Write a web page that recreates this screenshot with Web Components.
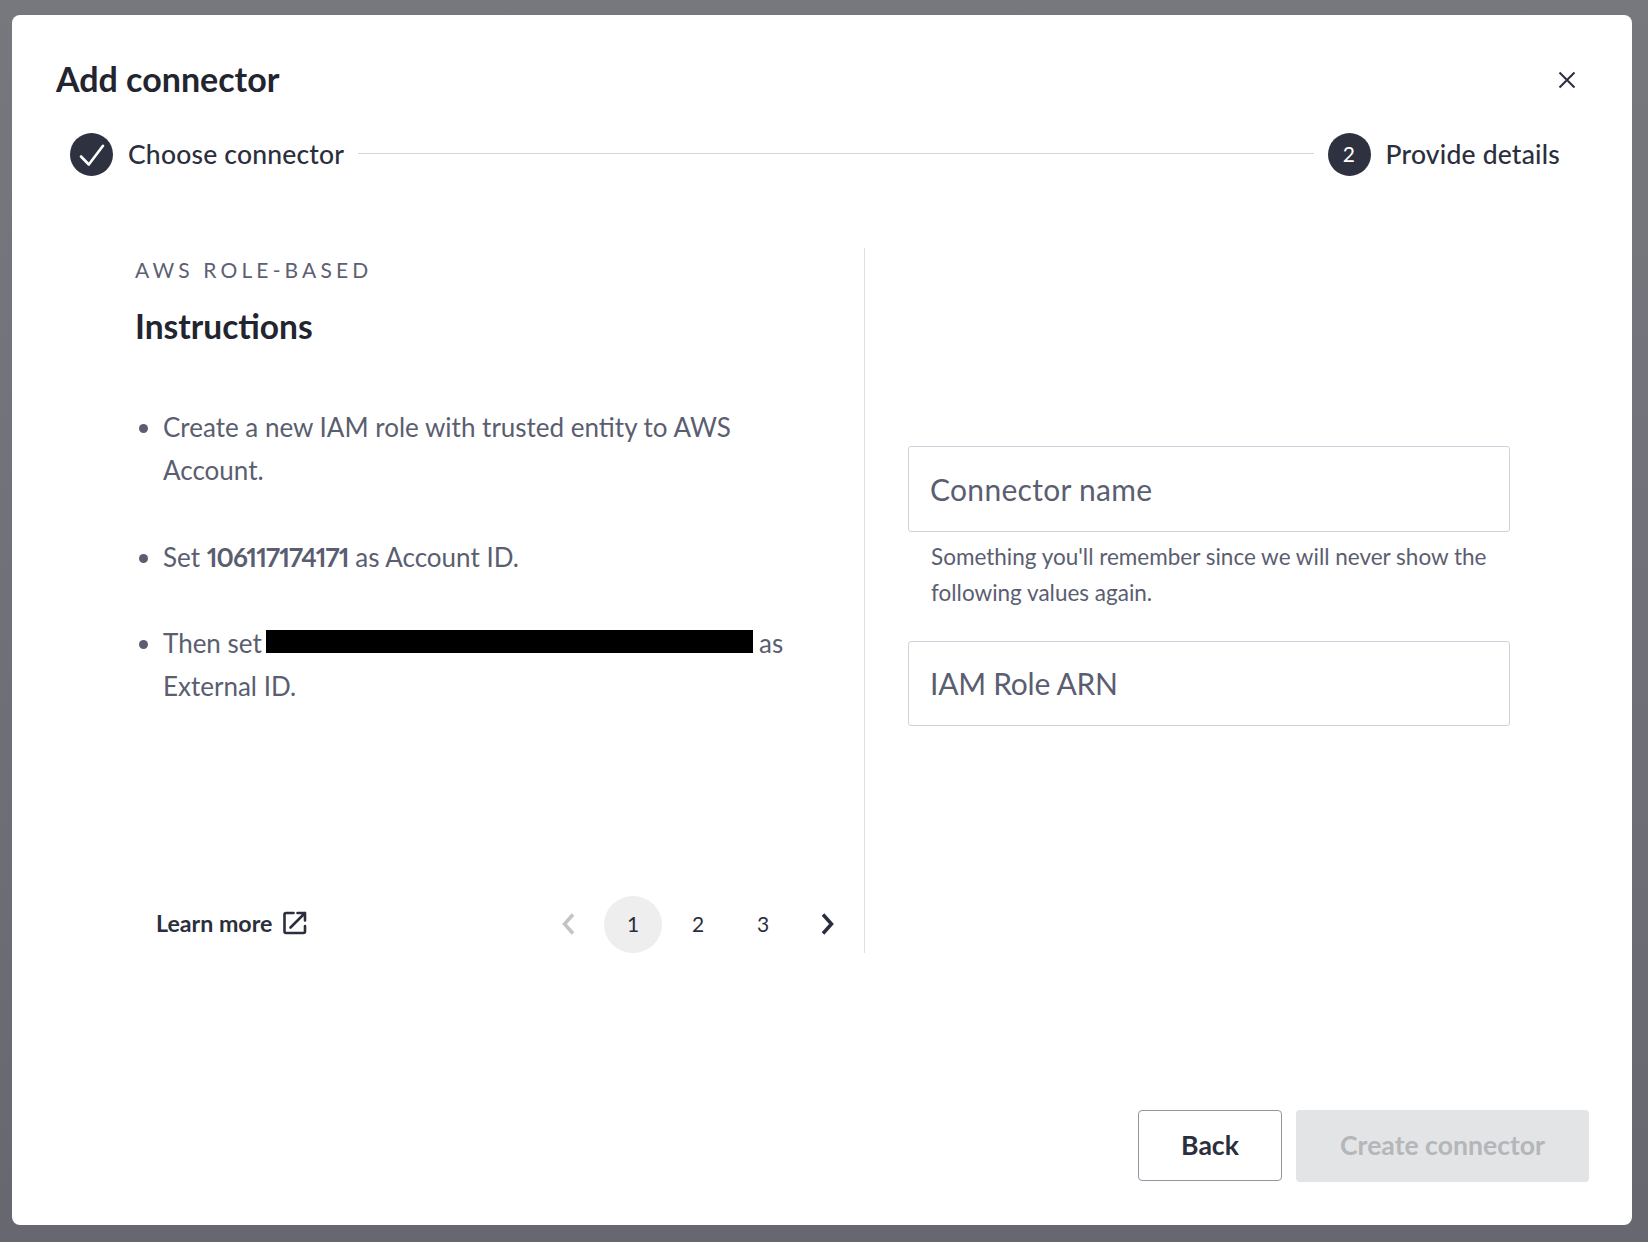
<!DOCTYPE html>
<html lang="en">
<head>
<meta charset="utf-8">
<title>Add connector</title>
<style>
  html, body { margin: 0; height: 100%; }
  body {
    box-sizing: border-box;
    height: 1242px;
    padding: 15px 16px 17px 12px;
    background: linear-gradient(180deg, #77787e 0%, #707178 50%, #67686f 100%);
    font-family: Lato, "Open Sans", sans-serif;
    color: #2b2f3d;
    overflow: hidden;
  }
</style>
</head>
<body>
<connector-modal heading="Add connector">
  <step-bar slot="steps">
    <step-item done>Choose connector</step-item>
    <step-item number="2">Provide details</step-item>
  </step-bar>
  <instruction-panel slot="left" eyebrow="AWS ROLE-BASED" heading="Instructions">
    <li>Create a new IAM role with trusted entity to AWS Account.</li>
    <li>Set <b>106117174171</b> as Account ID.</li>
    <li><span>Then set</span> <redacted-text></redacted-text> <span>as</span> <span>External ID.</span></li>
  </instruction-panel>
  <details-form slot="right">
    <text-field placeholder="Connector name" style="--tracking: .3px" hint="Something you'll remember since we will never show the following values again."></text-field>
    <text-field placeholder="IAM Role ARN" style="--tracking: -.25px"></text-field>
  </details-form>
  <app-button slot="actions" kind="outline">Back</app-button>
  <app-button slot="actions" kind="disabled">Create connector</app-button>
</connector-modal>

<script>
class ConnectorModal extends HTMLElement {
  constructor() {
    super();
    this.attachShadow({ mode: 'open' });
  }
  connectedCallback() {
    this.shadowRoot.innerHTML = `
      <style>
        :host { display: flex; flex-direction: column; box-sizing: border-box; height: 100%; background: #fff; border-radius: 8px; padding: 40px 43px 43px 44px; }
        header { display: flex; justify-content: space-between; align-items: center; height: 50px; }
        h1 { margin: 0; font-size: 34px; font-weight: 700; color: #22252f; line-height: 48px; height: 50px; }
        button { all: unset; display: flex; margin-right: 13px; }
        .body { display: flex; flex: 1; margin-top: 72px; min-height: 0; }
        .left { width: 809px; height: 705px; box-sizing: border-box; border-right: 1px solid #dfe0e6; }
        .right { flex: 1; height: 705px; }
        footer { display: flex; justify-content: flex-end; gap: 14px; }
      </style>
      <header>
        <h1>${this.getAttribute('heading')}</h1>
        <button aria-label="Close">
          <svg width="18" height="18" viewBox="0 0 18 18" fill="none" stroke="#2b2f3d" stroke-width="2"><path d="M1.5 1.5l15 15M16.5 1.5l-15 15"/></svg>
        </button>
      </header>
      <slot name="steps"></slot>
      <div class="body">
        <div class="left"><slot name="left"></slot></div>
        <div class="right"><slot name="right"></slot></div>
      </div>
      <footer><slot name="actions"></slot></footer>
    `;
  }
}

class StepBar extends HTMLElement {
  constructor() {
    super();
    this.attachShadow({ mode: 'open' }).innerHTML = `
      <style>
        :host { display: flex; align-items: center; margin: 27px 29px 0 14px; height: 44px; }
        i { flex: 1; height: 1px; margin: 0 14px; background: #d4d5de; position: relative; top: -1px; }
      </style>
      <slot name="a"></slot><i></i><slot name="b"></slot>
    `;
  }
  connectedCallback() {
    const [a, b] = this.querySelectorAll('step-item');
    a.slot = 'a';
    b.slot = 'b';
  }
}

class StepItem extends HTMLElement {
  constructor() {
    super();
    this.attachShadow({ mode: 'open' });
  }
  connectedCallback() {
    const done = this.hasAttribute('done');
    const mark = done
      ? '<svg width="26" height="26" viewBox="0 0 26 26" fill="none" stroke="#fff" stroke-width="2.6" stroke-linecap="round" stroke-linejoin="round"><path d="M2 15.5l7.8 8L24 4.8"/></svg>'
      : this.getAttribute('number');
    this.shadowRoot.innerHTML = `
      <style>
        :host { display: flex; align-items: center; gap: 15px; font-size: 26.5px; letter-spacing: .2px; font-weight: 500; color: #2b2f3d; white-space: nowrap; }
        .dot { box-sizing: border-box; width: 43px; height: 43px; padding-bottom: ${done ? 0 : 2}px; border-radius: 50%; background: #2e3240; color: #fff; display: flex; align-items: center; justify-content: center; font-size: 21px; font-weight: 400; }
      </style>
      <span class="dot">${mark}</span><slot></slot>
    `;
  }
}

class InstructionPanel extends HTMLElement {
  constructor() {
    super();
    this.attachShadow({ mode: 'open' });
  }
  connectedCallback() {
    this.shadowRoot.innerHTML = `
      <style>
        :host { display: flex; flex-direction: column; box-sizing: border-box; height: 705px; padding: 8px 0 0 79px; }
        .eyebrow { font-size: 21px; line-height: 28px; letter-spacing: 4.15px; color: #5c6072; }
        h2 { margin: 20px 0 0; font-size: 33.5px; line-height: 44px; font-weight: 700; color: #22252f; }
        ul { margin: 58px 0 0; padding: 0 0 0 28px; width: 660px; flex: 1; box-sizing: border-box; font-size: 26px; line-height: 43px; color: #5a5e70; }
        ::slotted(li) { margin-bottom: 43.5px; font-variant-numeric: proportional-nums; }
        .bottom { display: flex; align-items: center; justify-content: space-between; padding: 0 29px 0 21px; height: 57px; }
      </style>
      <div class="eyebrow">${this.getAttribute('eyebrow')}</div>
      <h2>${this.getAttribute('heading')}</h2>
      <ul><slot></slot></ul>
      <div class="bottom">
        <learn-more>Learn more</learn-more>
        <page-nav></page-nav>
      </div>
    `;
    this.querySelectorAll('b').forEach(b => { b.style.letterSpacing = '-.85px'; });
  }
}

class RedactedText extends HTMLElement {
  constructor() {
    super();
    this.attachShadow({ mode: 'open' }).innerHTML = `
      <style>:host { display: inline-block; width: 487px; height: 23px; margin: 0 -1px 0 -2px; background: #000; vertical-align: 0; }</style>
    `;
  }
}

class LearnMore extends HTMLElement {
  constructor() {
    super();
    this.attachShadow({ mode: 'open' }).innerHTML = `
      <style>
        :host { display: flex; align-items: center; gap: 11px; margin-bottom: 3px; font-size: 23.2px; font-weight: 700; color: #2b2f3d; }
      </style>
      <slot></slot>
      <svg width="24" height="24" viewBox="0 0 24 24" fill="none" stroke="#2b2f3d" stroke-width="2.6" stroke-linecap="round" stroke-linejoin="round"><path d="M10.5 2H3a1.5 1.5 0 0 0-1.5 1.5v17A1.5 1.5 0 0 0 3 22h17.5a1.5 1.5 0 0 0 1.5-1.5V15"/><path d="M14.5 2H22v7.5M22 2L7.5 16.5"/></svg>
    `;
  }
}

class PageNav extends HTMLElement {
  constructor() {
    super();
    this.attachShadow({ mode: 'open' }).innerHTML = `
      <style>
        :host { display: flex; align-items: center; font-size: 21px; color: #2b2f3d; }
        span, svg { display: flex; align-items: center; justify-content: center; }
        span { box-sizing: border-box; width: 58px; height: 57px; padding-bottom: 3px; margin-right: 7px; border-radius: 50%; }
        .on { background: #eeeeee; }
        svg { margin-bottom: 1px; }
        svg.prev { margin-right: 29px; }
        svg.next { margin-left: 22px; }
      </style>
      <svg class="prev" width="14" height="22" viewBox="0 0 14 22" fill="none" stroke="#c4c4c4" stroke-width="3.5"><path d="M12 1.5L3.5 11l8.500 9.500"/></svg>
      <span class="on">1</span><span>2</span><span>3</span>
      <svg class="next" width="14" height="22" viewBox="0 0 14 22" fill="none" stroke="#2b2f3d" stroke-width="3.5"><path d="M2 1.500L10.500 11 2 20.500"/></svg>
    `;
  }
}

class DetailsForm extends HTMLElement {
  constructor() {
    super();
    this.attachShadow({ mode: 'open' }).innerHTML = `
      <style>:host { display: flex; flex-direction: column; gap: 30px; padding: 198px 0 0 43px; width: 602px; }</style>
      <slot></slot>
    `;
  }
}

class TextField extends HTMLElement {
  constructor() {
    super();
    this.attachShadow({ mode: 'open' });
  }
  connectedCallback() {
    const hint = this.getAttribute('hint');
    this.shadowRoot.innerHTML = `
      <style>
        :host { display: block; width: 602px; }
        .box { box-sizing: border-box; height: 85.5px; border: 1px solid #cfd2dc; border-radius: 3px; padding: 0 21px; display: flex; align-items: center; font-size: 30px; letter-spacing: var(--tracking, 0); color: #5a5e70; }
        p { margin: 7px 23px 0; font-size: 22.5px; line-height: 36px; color: #5a5e70; }
      </style>
      <div class="box">${this.getAttribute('placeholder')}</div>
      ${hint ? `<p>${hint}</p>` : ''}
    `;
  }
}

class AppButton extends HTMLElement {
  constructor() {
    super();
    this.attachShadow({ mode: 'open' });
  }
  connectedCallback() {
    const outline = this.getAttribute('kind') === 'outline';
    this.shadowRoot.innerHTML = `
      <style>
        :host { display: inline-block; }
        div { box-sizing: border-box; display: flex; align-items: center; justify-content: center; padding-bottom: 2px; font-size: 26.6px; font-weight: 700; border-radius: 4px;
          width: ${outline ? 144 : 293}px; height: ${outline ? 71 : 72}px;
          ${outline ? 'border: 1px solid #95959f; color: #2b2f3d; background: #fff;' : 'background: #e3e4e6; color: #b5b6ba;'} }
      </style>
      <div><slot></slot></div>
    `;
  }
}

customElements.define('connector-modal', ConnectorModal);
customElements.define('step-bar', StepBar);
customElements.define('step-item', StepItem);
customElements.define('instruction-panel', InstructionPanel);
customElements.define('redacted-text', RedactedText);
customElements.define('learn-more', LearnMore);
customElements.define('page-nav', PageNav);
customElements.define('details-form', DetailsForm);
customElements.define('text-field', TextField);
customElements.define('app-button', AppButton);
</script>
</body>
</html>
